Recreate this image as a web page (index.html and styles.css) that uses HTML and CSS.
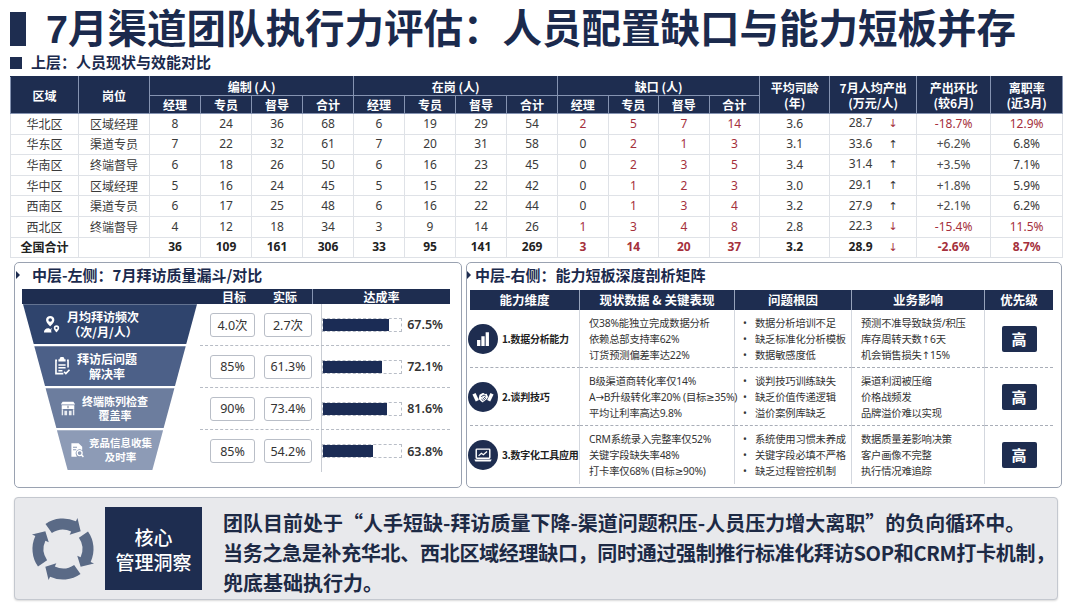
FILE: index.html
```html
<!DOCTYPE html>
<html lang="zh-CN">
<head>
<meta charset="utf-8">
<title>7月渠道团队执行力评估</title>
<link rel="stylesheet" href="styles.css">
</head>
<body>
<div class="page">
  <h1 class="title"><span class="title-bar"></span>7月渠道团队执行力评估：人员配置缺口与能力短板并存</h1>
  <h2 class="sub"><span class="sq"></span>上层：人员现状与效能对比</h2>

  <table class="staff">
    <colgroup>
      <col class="w-reg"><col class="w-pos">
      <col class="w-n"><col class="w-n"><col class="w-n"><col class="w-n">
      <col class="w-n"><col class="w-n"><col class="w-n"><col class="w-n">
      <col class="w-g"><col class="w-g"><col class="w-g"><col class="w-g">
      <col class="w-age"><col class="w-out"><col class="w-mom"><col class="w-quit">
    </colgroup>
    <thead>
      <tr class="h1r">
        <th rowspan="2">区域</th><th rowspan="2">岗位</th>
        <th colspan="4">编制 (人)</th><th colspan="4">在岗 (人)</th><th colspan="4">缺口 (人)</th>
        <th rowspan="2">平均司龄<br>(年)</th><th rowspan="2">7月人均产出<br>(万元/人)</th>
        <th rowspan="2">产出环比<br>(较6月)</th><th rowspan="2">离职率<br>(近3月)</th>
      </tr>
      <tr class="h2r">
        <th>经理</th><th>专员</th><th>督导</th><th>合计</th>
        <th>经理</th><th>专员</th><th>督导</th><th>合计</th>
        <th>经理</th><th>专员</th><th>督导</th><th>合计</th>
      </tr>
    </thead>
    <tbody>
      <tr><td>华北区</td><td>区域经理</td><td>8</td><td>24</td><td>36</td><td>68</td><td>6</td><td>19</td><td>29</td><td>54</td><td class="r">2</td><td class="r">5</td><td class="r">7</td><td class="r">14</td><td>3.6</td><td>28.7<span class="ar dn">↓</span></td><td class="r">-18.7%</td><td class="r">12.9%</td></tr>
      <tr><td>华东区</td><td>渠道专员</td><td>7</td><td>22</td><td>32</td><td>61</td><td>7</td><td>20</td><td>31</td><td>58</td><td>0</td><td class="r">2</td><td class="r">1</td><td class="r">3</td><td>3.1</td><td>33.6<span class="ar up">↑</span></td><td class="pos">+6.2%</td><td>6.8%</td></tr>
      <tr><td>华南区</td><td>终端督导</td><td>6</td><td>18</td><td>26</td><td>50</td><td>6</td><td>16</td><td>23</td><td>45</td><td>0</td><td class="r">2</td><td class="r">3</td><td class="r">5</td><td>3.4</td><td>31.4<span class="ar up">↑</span></td><td class="pos">+3.5%</td><td>7.1%</td></tr>
      <tr><td>华中区</td><td>区域经理</td><td>5</td><td>16</td><td>24</td><td>45</td><td>5</td><td>15</td><td>22</td><td>42</td><td>0</td><td class="r">1</td><td class="r">2</td><td class="r">3</td><td>3.0</td><td>29.1<span class="ar up">↑</span></td><td class="pos">+1.8%</td><td>5.9%</td></tr>
      <tr><td>西南区</td><td>渠道专员</td><td>6</td><td>17</td><td>25</td><td>48</td><td>6</td><td>16</td><td>22</td><td>44</td><td>0</td><td class="r">1</td><td class="r">3</td><td class="r">4</td><td>3.2</td><td>27.9<span class="ar up">↑</span></td><td class="pos">+2.1%</td><td>6.2%</td></tr>
      <tr><td>西北区</td><td>终端督导</td><td>4</td><td>12</td><td>18</td><td>34</td><td>3</td><td>9</td><td>14</td><td>26</td><td class="r">1</td><td class="r">3</td><td class="r">4</td><td class="r">8</td><td>2.8</td><td>22.3<span class="ar dn">↓</span></td><td class="r">-15.4%</td><td class="r">11.5%</td></tr>
      <tr class="total"><td>全国合计</td><td></td><td>36</td><td>109</td><td>161</td><td>306</td><td>33</td><td>95</td><td>141</td><td>269</td><td class="r">3</td><td class="r">14</td><td class="r">20</td><td class="r">37</td><td>3.2</td><td>28.9<span class="ar dn">↓</span></td><td class="r">-2.6%</td><td class="r">8.7%</td></tr>
    </tbody>
  </table>

  <div class="mid">
    <section class="panel funnel-panel">
      <h3 class="ptitle">中层-左侧：7月拜访质量漏斗/对比</h3>
      <div class="fhead"><span class="fh-blank"></span><span class="fh-t">目标</span><span class="fh-a">实际</span><span class="fh-r">达成率</span></div>

      <div class="frow">
        <div class="seg s1">
          <div class="seg-in">
            <svg class="ficon" viewBox="0 0 20 20"><path fill="#fff" fill-rule="evenodd" d="M8 1a4.6 4.6 0 0 0-4.6 4.6C3.4 8.8 8 12.6 8 12.6s4.6-3.8 4.6-7A4.6 4.6 0 0 0 8 1zm0 2.6a2 2 0 1 1 0 4a2 2 0 1 1 0-4z"/><path fill="#fff" d="M1 19.5c0-3 2-4.8 4.6-4.8h1.2L8 16.2l1.2-1.5h.6c-.5.9-.7 1.9-.7 2.9 0 .7.2 1.3.4 1.9z"/><path fill="#fff" fill-rule="evenodd" d="M15 11.5a3 3 0 0 0-3 3c0 2.1 3 4.8 3 4.8s3-2.7 3-4.8a3 3 0 0 0-3-3zm0 1.8a1.2 1.2 0 1 1 0 2.4a1.2 1.2 0 1 1 0-2.4z"/></svg>
            <div class="seg-text">月均拜访频次<br>（次/月/人）</div>
          </div>
        </div>
        <div class="metrics">
          <span class="box t">4.0次</span><span class="box a">2.7次</span>
          <div class="rate"><div class="bar"><i class="f1"></i></div><span class="pct">67.5%</span></div>
        </div>
      </div>

      <div class="frow">
        <div class="seg s2">
          <div class="seg-in">
            <svg class="ficon" viewBox="0 0 20 20"><path fill="#fff" d="M6 2.5h1.3a2.7 2.7 0 0 1 5.4 0H14V5H6z"/><path fill="none" stroke="#fff" stroke-width="1.8" d="M4.5 3.8H3.3v14.7h8.2M15.5 3.8h1.2v8"/><path fill="#fff" d="M6 8h8v1.6H6zM6 11.2h8v1.6H6zM6 14.4h4.5V16H6z"/><path fill="none" stroke="#fff" stroke-width="1.8" d="M12.3 16.4l2 2 4-4.2"/></svg>
            <div class="seg-text">拜访后问题<br>解决率</div>
          </div>
        </div>
        <div class="metrics">
          <span class="box t">85%</span><span class="box a">61.3%</span>
          <div class="rate"><div class="bar"><i class="f2"></i></div><span class="pct">72.1%</span></div>
        </div>
      </div>

      <div class="frow">
        <div class="seg s3">
          <div class="seg-in">
            <svg class="ficon" viewBox="0 0 20 20"><path fill="#fff" d="M4 3h12l2 3H2z"/><path fill="#fff" d="M3 7h14v4H3z"/><path fill="#fff" d="M3 11.5h1.6V18H3zM15.4 11.5H17V18h-1.6zM6 13h3v5H6zM11 13h3v5h-3z" opacity=".85"/><path fill="#1e2d50" d="M9.3 7.6h1.4v2.8H9.3z" opacity=".5"/></svg>
            <div class="seg-text">终端陈列检查<br>覆盖率</div>
          </div>
        </div>
        <div class="metrics">
          <span class="box t">90%</span><span class="box a">73.4%</span>
          <div class="rate"><div class="bar"><i class="f3"></i></div><span class="pct">81.6%</span></div>
        </div>
      </div>

      <div class="frow">
        <div class="seg s4">
          <div class="seg-in">
            <svg class="ficon" viewBox="0 0 20 20"><path fill="#fff" d="M3 1.5h9l4.5 4.5v4.2a5 5 0 0 0-7.3 6.6L9.8 18.5H3z"/><path fill="#8d9bb5" d="M5 6h5v1.3H5zM5 9h4v1.3H5z"/><circle cx="13.3" cy="13.8" r="3.1" fill="none" stroke="#fff" stroke-width="1.6"/><path stroke="#fff" stroke-width="1.8" d="M15.4 16l2.6 2.6"/></svg>
            <div class="seg-text">竞品信息收集<br>及时率</div>
          </div>
        </div>
        <div class="metrics">
          <span class="box t">85%</span><span class="box a">54.2%</span>
          <div class="rate"><div class="bar"><i class="f4"></i></div><span class="pct">63.8%</span></div>
        </div>
      </div>
    </section>

    <section class="panel matrix-panel">
      <h3 class="ptitle">中层-右侧：能力短板深度剖析矩阵</h3>
      <div class="matrix">
        <div class="mh">能力维度</div><div class="mh">现状数据 &amp; 关键表现</div><div class="mh">问题根因</div><div class="mh">业务影响</div><div class="mh end">优先级</div>

        <div class="mc dim"><span class="dicon"><svg viewBox="0 0 24 24"><path fill="#fff" d="M5.5 13h3.6v6.5H5.5zM10.2 9h3.6v10.5h-3.6zM14.9 4.5h3.6v15h-3.6z"/></svg></span><b>1.数据分析能力</b></div>
        <div class="mc"><p>仅38%能独立完成数据分析</p><p>依赖总部支持率62%</p><p>订货预测偏差率达22%</p></div>
        <div class="mc bl"><p><span class="dot">•</span>数据分析培训不足</p><p><span class="dot">•</span>缺乏标准化分析模板</p><p><span class="dot">•</span>数据敏感度低</p></div>
        <div class="mc"><p>预测不准导致缺货/积压</p><p>库存周转天数↑6天</p><p>机会销售损失↑15%</p></div>
        <div class="mc pri end"><span class="hi">高</span></div>

        <div class="mc dim"><span class="dicon"><svg viewBox="0 0 24 24"><path fill="#fff" d="M0.5 9.2l3.4-1.6 3.6 7.8-3.4 1.6z"/><path fill="#fff" d="M23.5 9.2l-3.4-1.6-3.6 7.8 3.4 1.6z"/><path fill="#fff" d="M8.2 9.6l3-1.6c.7-.4 1.4-.3 2 .1l1 .7 1.9-.3 1.4 3.4-1.2 2.4-3.9 3.2c-.5.4-1.1.4-1.6 0l-3.6-3.4z"/><path fill="none" stroke="#1e2d50" stroke-width="1" stroke-linecap="round" d="M10.4 11.4l2.8-1.6 1.6 1.2M10.6 14.6l1.7 1.5M12 13.4l1.7 1.5M13.3 12.2l1.6 1.4"/></svg></span><b>2.谈判技巧</b></div>
        <div class="mc"><p>B级渠道商转化率仅14%</p><p>A→B升级转化率20% (目标≥35%)</p><p>平均让利率高达9.8%</p></div>
        <div class="mc bl"><p><span class="dot">•</span>谈判技巧训练缺失</p><p><span class="dot">•</span>缺乏价值传递逻辑</p><p><span class="dot">•</span>溢价案例库缺乏</p></div>
        <div class="mc"><p>渠道利润被压缩</p><p>价格战频发</p><p>品牌溢价难以实现</p></div>
        <div class="mc pri end"><span class="hi">高</span></div>

        <div class="mc dim last"><span class="dicon"><svg viewBox="0 0 24 24"><rect x="4.6" y="5.6" width="14.8" height="10" rx=".8" fill="none" stroke="#fff" stroke-width="1.6"/><path fill="#fff" d="M2.5 16.8h19l-1.2 2.2H3.7z"/><path fill="none" stroke="#fff" stroke-width="1.3" d="M7.2 13l3-2.8 2.2 1.6 4-3.6"/></svg></span><b>3.数字化工具应用</b></div>
        <div class="mc last"><p>CRM系统录入完整率仅52%</p><p>关键字段缺失率48%</p><p>打卡率仅68% (目标≥90%)</p></div>
        <div class="mc bl last"><p><span class="dot">•</span>系统使用习惯未养成</p><p><span class="dot">•</span>关键字段必填不严格</p><p><span class="dot">•</span>缺乏过程管控机制</p></div>
        <div class="mc last"><p>数据质量差影响决策</p><p>客户画像不完整</p><p>执行情况难追踪</p></div>
        <div class="mc pri end last"><span class="hi">高</span></div>
      </div>
    </section>
  </div>

  <div class="insight">
    <svg class="cycle" viewBox="0 0 80 80">
      <g fill="#5a6a86">
        <path id="arc" d="M67.03 21.07A33 33 0 0 1 69.91 53.95L73.53 55.64L59.09 59.09L55.41 47.18L59.03 48.87A21 21 0 0 0 57.2 27.95Z"/>
        <use href="#arc" transform="rotate(90 40 40)"/>
        <use href="#arc" transform="rotate(180 40 40)"/>
        <use href="#arc" transform="rotate(270 40 40)"/>
      </g>
    </svg>
    <div class="core"><span>核心</span><span>管理洞察</span></div>
    <div class="itext">
      <p>团队目前处于<span class="q">“</span>人手短缺-拜访质量下降-渠道问题积压-人员压力增大离职<span class="q">”</span>的负向循环中。</p>
      <p class="tight">当务之急是补充华北、西北区域经理缺口，同时通过强制推行标准化拜访SOP和CRM打卡机制，</p>
      <p>兜底基础执行力。</p>
    </div>
  </div>
</div>
</body>
</html>
```

FILE: styles.css
```css
* { box-sizing: border-box; margin: 0; padding: 0; }
html, body { width: 1080px; height: 608px; overflow: hidden; background: #ffffff; }
body { font-family: "Noto Sans CJK SC", "Noto Sans", sans-serif; color: #1e2d50; }

.page { padding: 4px 17px 0 10px; }

/* Title */
.title {
  display: flex; align-items: center; white-space: nowrap; padding-top: 2.5px;
  font-family: "Liberation Sans", "Noto Sans CJK SC", sans-serif;
  font-size: 39.5px; line-height: 44px; font-weight: 700; color: #1b2a4d;
}
.title-bar { width: 16px; height: 34px; background: #1e2d50; margin-right: 20px; flex: none; }

.sub {
  display: flex; align-items: center; margin-top: 1.5px; padding-top: 1px;
  font-family: "Liberation Sans", "Noto Sans CJK SC", sans-serif;
  font-size: 15px; line-height: 20px; font-weight: 700; color: #1b2a4d;
}
.sq { width: 12px; height: 12px; background: #1e2d50; margin-right: 9px; }

/* Staff table */
.staff {
  width: 1053px; margin-top: 3px; border-collapse: collapse; table-layout: fixed;
  font-family: "Noto Sans", "Noto Sans CJK SC", sans-serif; font-size: 12px; color: #3a3a3a;
  text-align: center;
}
.w-reg { width: 68px; } .w-pos { width: 71px; } .w-n { width: 51px; } .w-g { width: 50.5px; }
.w-age { width: 70px; } .w-out { width: 87px; } .w-mom { width: 74px; } .w-quit { width: 72px; }
.staff th {
  background: #1e2d50; color: #fff; font-family: "Noto Sans CJK SC", sans-serif;
  font-size: 12px; font-weight: 700; line-height: 15px; padding: 0;
  border: 1px solid #8593b1;
}
.staff .h1r th { height: 19px; border-top-color: #1e2d50; }
.staff .h2r th { height: 18px; }
.staff td { border: 1px solid #dfe2e7; height: 20.6px; padding: 0; line-height: 14px; }
.staff td:first-child, .staff td:nth-child(2) { font-family: "Noto Sans CJK SC", sans-serif; }
.staff .r { color: #a5303c; }
.staff .pos { color: #4a4a4a; }
.staff .total td { font-weight: 700; color: #222; }
.staff .total td.r { color: #a5303c; }
.ar { display: inline-block; margin-left: 16px; font-family: "DejaVu Sans", sans-serif; font-size: 11px; font-weight: 400; }
.ar.dn { color: #a5303c; }
.ar.up { color: #333; }

/* Middle panels */
.mid { display: flex; gap: 4px; margin: 4px 0 0 4px; height: 226px; }
.panel { border: 1px solid #9aa2b1; border-radius: 5px; background: #fff; }
.funnel-panel { width: 448px; padding: 0 11px 0 7px; }
.matrix-panel { width: 596px; padding: 0 0 0 3px; }

.ptitle {
  display: flex; align-items: center; margin-top: 3px;
  font-size: 15px; line-height: 18px; font-weight: 700; color: #1b2a4d; white-space: nowrap;
}
.ptitle::before {
  content: ""; width: 0; height: 0; flex: none;
  border-left: 4px solid #1e2d50; border-top: 4px solid transparent; border-bottom: 4px solid transparent;
}
.funnel-panel .ptitle { margin-left: -6px; }
.funnel-panel .ptitle::before { margin-right: 12px; }
.matrix-panel .ptitle { margin-left: -3px; }
.matrix-panel .ptitle::before { margin-right: 4px; }

/* Funnel */
.fhead {
  display: flex; height: 15px; margin-top: 5px; background: #1e2d50; color: #fff;
  font-size: 12px; font-weight: 700; line-height: 15px; text-align: center;
}
.fh-blank { width: 188px; }
.fh-t { width: 48px; }
.fh-a { width: 54px; }
.fh-r { flex: 1; border-left: 1px solid #8593b1; }

.frow { display: flex; align-items: flex-start; height: 42px; }
.frow:first-of-type { margin-top: 3px; }
.seg {
  width: 178px; height: 40px; flex: none; color: #fff; display: flex; align-items: center;
  font-size: 12px; font-weight: 700; line-height: 15px;
}
.seg-in { display: flex; align-items: center; gap: 6px; }
.seg-text { text-align: center; white-space: nowrap; }
.ficon { width: 18px; height: 18px; flex: none; }
.s1 { background: #2f446d; clip-path: polygon(1px 0, 175px 0, 164.2px 100%, 11.8px 100%); }
.s1 .seg-in { padding-left: 21px; }
.s2 { background: #4c6088; clip-path: polygon(12.3px 0, 163.7px 0, 152.9px 100%, 23.1px 100%); }
.s2 .seg-in { padding-left: 31px; }
.s3 { background: #6c7d9e; clip-path: polygon(23.6px 0, 152.4px 0, 141.6px 100%, 34.4px 100%); font-size: 11px; line-height: 14px; }
.s3 .seg-in { padding-left: 37px; gap: 5px; }
.s4 { background: #8d9bb6; clip-path: polygon(34.9px 0, 141.1px 0, 130.3px 100%, 45.7px 100%); font-size: 10.5px; line-height: 14px; }
.s4 .seg-in { padding-left: 47px; gap: 4px; }
.s4 .ficon { width: 16px; height: 16px; }

.metrics {
  flex: 1; align-self: stretch; display: flex; align-items: center; padding-left: 10px;
  border-bottom: 1px dashed #b7bcc5;
}
.frow:last-child .metrics { border-bottom: none; }
.box {
  height: 24px; display: flex; align-items: center; justify-content: center;
  border: 1px solid #b9bec7; border-radius: 3px; background: #fff;
  font-family: "Noto Sans", "Noto Sans CJK SC", sans-serif; font-size: 12.5px; color: #333;
}
.box.t { width: 45px; }
.box.a { width: 48px; margin-left: 9px; }
.rate { flex: 1; align-self: stretch; margin-left: 9px; border-left: 1px solid #c8ccd3; display: flex; align-items: center; }
.bar { width: 80px; height: 14px; border: 1px dashed #b9bec7; background: #fff; flex: none; }
.bar i { display: block; height: 100%; background: #1b2c55; }
.bar .f1 { width: 85%; } .bar .f2 { width: 76%; } .bar .f3 { width: 82%; } .bar .f4 { width: 64%; }
.pct { flex: 1; text-align: right; padding-right: 7px; font-family: "Noto Sans", sans-serif; font-size: 12.5px; font-weight: 600; color: #333; }

/* Matrix */
.matrix { display: grid; grid-template-columns: 110px 155px 117px 133px 68px; width: 583px; margin-top: 6px; }
.mh {
  height: 20px; line-height: 20px; text-align: center; background: #1e2d50; color: #fff;
  font-size: 12.5px; font-weight: 700; border-right: 1px solid #97a3bb;
}
.mh.end { border-right: none; }
.mc {
  height: 58px; display: flex; flex-direction: column; justify-content: center; padding-left: 9px;
  border-right: 1px solid #d3d7de; border-bottom: 1px dashed #a9aeb8;
  font-family: "Noto Sans", "DejaVu Sans", "Noto Sans CJK SC", sans-serif;
  font-size: 10.3px; line-height: 16px; color: #333; white-space: nowrap; letter-spacing: -0.2px;
}
.mc.end { border-right: none; }
.mc.last { border-bottom: none; }
.mc.bl { padding-left: 8px; }
.dot { display: inline-block; width: 12px; }
.mc.dim { flex-direction: row; align-items: center; justify-content: flex-start; padding-left: 0; gap: 4px; }
.mc.dim b { font-family: "Noto Sans CJK SC", sans-serif; font-weight: 700; color: #1f1f1f; font-size: 10px; letter-spacing: -0.3px; }
.dicon { width: 30px; height: 30px; border-radius: 50%; background: #1e2d50; display: flex; align-items: center; justify-content: center; flex: none; margin-left: -2px; }
.dicon svg { width: 22px; height: 22px; }
.mc.pri { align-items: center; padding-left: 0; }
.hi {
  width: 35px; height: 26px; display: flex; align-items: center; justify-content: center;
  background: #1e2d50; color: #fff; font-family: "Noto Sans CJK SC", sans-serif;
  font-size: 15px; font-weight: 700; border-radius: 2px; letter-spacing: 0;
}

/* Insight */
.insight {
  width: 1044px; height: 103px; margin: 9px 0 0 4px; display: flex; align-items: center; padding-left: 11px;
  background: #e8e9ec; border: 1px solid #c4c8cf; border-radius: 4px; box-shadow: 0 1px 2px rgba(0,0,0,.15);
}
.cycle { width: 74px; height: 74px; flex: none; }
.core {
  width: 97px; height: 83px; margin-left: 5px; flex: none; display: flex; flex-direction: column;
  align-items: center; justify-content: center; background: #1e2d50; color: #fff;
  font-size: 19px; line-height: 25px; font-weight: 500;
}
.itext {
  margin-left: 21px; padding-top: 9px; white-space: nowrap;
  font-size: 20px; line-height: 30px; font-weight: 700; color: #1d2a45;
}
.itext .q { font-feature-settings: "fwid"; }
.itext .tight { letter-spacing: -0.3px; }
```
